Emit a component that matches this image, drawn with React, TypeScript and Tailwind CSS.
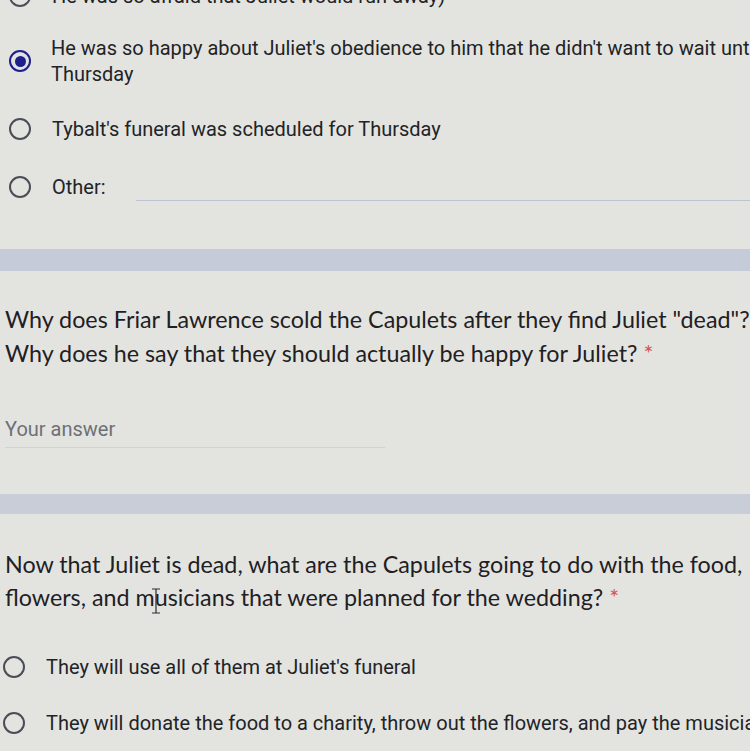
import React from "react";

function Radio({ checked = false }: { checked?: boolean }) {
  return (
    <span
      className={`flex h-[22px] w-[22px] shrink-0 items-center justify-center rounded-full border-[2.5px] ${
        checked ? "border-[#1d1f8c]" : "border-[#4a4d55]"
      }`}
    >
      {checked && <span className="h-[11px] w-[11px] rounded-full bg-[#1d1f8c]" />}
    </span>
  );
}

function Option({
  checked,
  children,
  className = "",
}: {
  checked?: boolean;
  children: React.ReactNode;
  className?: string;
}) {
  return (
    <div className={`flex items-center gap-[21px] ${className}`}>
      <Radio checked={checked} />
      <div className="text-[20px] leading-[26px] text-[#222327] whitespace-nowrap">{children}</div>
    </div>
  );
}

export default function App() {
  return (
    <div className="relative h-[751px] w-[750px] overflow-hidden bg-[#e3e4e0] font-['Roboto','Liberation_Sans',sans-serif]">
      {/* previous question, options */}
      <div className="pl-[9px]">
        <Option className="mt-[-17px]">He was so afraid that Juliet would run away)</Option>

        <div className="mt-[26px] flex items-center gap-[20px]">
          <Radio checked />
          <div className="text-[20px] leading-[26px] text-[#222327] whitespace-nowrap">
            He was so happy about Juliet's obedience to him that he didn't want to wait until
            <br />
            Thursday
          </div>
        </div>

        <Option className="mt-[29px]">Tybalt's funeral was scheduled for Thursday</Option>

        <div className="mt-[30px] flex items-center">
          <Option>Other:</Option>
          <div className="ml-[30px] mt-[28px] h-px flex-1 bg-[#bcc3d3]" />
        </div>
      </div>

      <div className="mt-[48px] h-[22px] bg-[#c6cbd9]" />

      {/* question 1 */}
      <div className="pl-[5px] pt-[31px]">
        <div className="text-[23.3px] leading-[34px] text-[#1f2024] whitespace-nowrap font-['Lato','Roboto',sans-serif]">
          Why does Friar Lawrence scold the Capulets after they find Juliet "dead"?
          <br />
          Why does he say that they should actually be happy for Juliet?{" "}
          <span className="text-[#d9534f]">*</span>
        </div>
        <div className="mt-[47px] text-[20px] leading-[24px] text-[#6e7077]">Your answer</div>
        <div className="mt-[6px] h-px w-[380px] bg-[#d0d2d6]" />
      </div>

      <div className="mt-[46px] h-[20px] bg-[#c9cdd8]" />

      {/* question 2 */}
      <div className="pl-[5px] pt-[34px]">
        <div className="relative text-[23.3px] leading-[33px] text-[#1f2024] whitespace-nowrap font-['Lato','Roboto',sans-serif]">
          Now that Juliet is dead, what are the Capulets going to do with the food,
          <br />
          flowers, and musicians that were planned for the wedding?{" "}
          <span className="text-[#d9534f]">*</span>
          {/* text cursor */}
          <svg className="absolute left-[146px] top-[40px]" width="10" height="26" viewBox="0 0 10 26">
            <path d="M1 1h8M5 1v24M1 25h8" stroke="#2a2b2e" strokeWidth="1.2" fill="none" />
          </svg>
        </div>
      </div>

      <div className="pl-[3px]">
        <Option className="mt-[40px]">They will use all of them at Juliet's funeral</Option>
        <Option className="mt-[30px]">
          They will donate the food to a charity, throw out the flowers, and pay the musicians
        </Option>
      </div>
    </div>
  );
}
